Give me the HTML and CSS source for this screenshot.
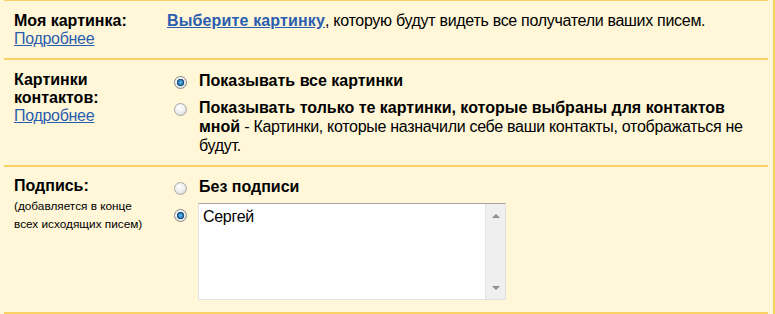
FILE: index.html
```html
<!DOCTYPE html>
<html lang="ru">
<head>
<meta charset="utf-8">
<title>Настройки</title>
<link rel="stylesheet" href="styles.css">
</head>
<body>
<div class="panel">
  <div class="row row-first">
    <div class="label">
      <div class="title">Моя картинка:</div>
      <a class="link" href="#">Подробнее</a>
    </div>
    <div class="content">
      <p class="text"><a class="link strong" href="#">Выберите картинку</a>, которую будут видеть все получатели ваших писем.</p>
    </div>
  </div>

  <div class="row">
    <div class="label">
      <div class="title">Картинки контактов:</div>
      <a class="link" href="#">Подробнее</a>
    </div>
    <div class="content">
      <div class="option">
        <span class="radio checked"></span>
        <div class="option-text"><b>Показывать все картинки</b></div>
      </div>
      <div class="option gap">
        <span class="radio"></span>
        <div class="option-text"><b>Показывать только те картинки, которые выбраны для контактов мной</b> - Картинки, которые назначили себе ваши контакты, отображаться не будут.</div>
      </div>
    </div>
  </div>

  <div class="row row-last">
    <div class="label">
      <div class="title">Подпись:</div>
      <div class="hint">(добавляется в конце всех исходящих писем)</div>
    </div>
    <div class="content">
      <div class="option">
        <span class="radio"></span>
        <div class="option-text"><b>Без подписи</b></div>
      </div>
      <div class="option sig">
        <span class="radio checked sig-radio"></span>
        <div class="textarea">
          <div class="ta-text">Сергей</div>
          <div class="scrollbar">
            <span class="arrow up"></span>
            <span class="arrow down"></span>
          </div>
        </div>
      </div>
    </div>
  </div>
</div>
</body>
</html>
```

FILE: styles.css
```css
html, body {
  margin: 0;
  padding: 0;
}

body {
  font-family: "Liberation Sans", Arial, sans-serif;
  font-size: 16px;
  line-height: 18px;
  letter-spacing: -0.3px;
  color: #000;
  background: #fff7d7;
}

b,
.title {
  font-weight: bold;
  letter-spacing: 0;
}

.strong {
  font-weight: bold;
  letter-spacing: 0.15px;
}

.panel {
  width: 775px;
  height: 314px;
  box-sizing: border-box;
  background: #fff7d7;
  border-right: 2px solid #fad163;
  padding-right: 5px;
  padding-left: 4px;
  overflow: hidden;
}

.row {
  display: grid;
  grid-template-columns: 153px 1fr;
  padding: 11px 0 10px 10px;
  border-bottom: 2px solid #fad163;
}

.row-first {
  border-top: 1px solid #fad163;
}

.row-last {
  padding-top: 10px;
  padding-bottom: 12px;
}

.title {
  width: 140px;
}

.link {
  color: #2a5db0;
  text-decoration: underline;
}

.text {
  margin: 0;
}

.hint {
  font-size: 11.8px;
  line-height: 18px;
  letter-spacing: 0;
  margin-top: 2px;
  width: 130px;
}

.option {
  display: flex;
  align-items: flex-start;
  padding-left: 7px;
  column-gap: 12px;
}

.option-text {
  line-height: 19px;
  flex: 1;
}

.option.gap {
  margin-top: 8px;
}

.radio {
  flex: none;
  width: 13px;
  height: 13px;
  margin-top: 5px;
  border-radius: 50%;
  box-sizing: border-box;
  border: 1px solid #a9a9a9;
  background: radial-gradient(circle at 40% 35%, #ffffff 0%, #f0f0f0 45%, #cfcfcf 100%);
}

.radio.checked {
  background:
    radial-gradient(circle at 50% 50%, #6fc0ee 0px, #1f6fae 2.6px, #0f3f6e 3.4px, transparent 4px),
    radial-gradient(circle at 40% 35%, #ffffff 0%, #f0f0f0 45%, #cfcfcf 100%);
  border-color: #8a8a8a;
}

.option.sig {
  margin-top: 7px;
  column-gap: 11px;
}

.sig-radio {
  margin-top: 6px;
}

.textarea {
  display: flex;
  width: 308px;
  height: 97px;
  box-sizing: border-box;
  background: #fff;
  border: 1px solid #e2e2e2;
  border-top-color: #a6a6a6;
}

.ta-text {
  flex: 1;
  padding: 4px 0 0 4px;
  font-size: 16px;
  line-height: 18px;
}

.scrollbar {
  width: 20px;
  flex: none;
  background: #efefef;
  border-left: 1px solid #e4e4e4;
  display: flex;
  flex-direction: column;
  justify-content: space-between;
  align-items: center;
  padding: 10px 0 9px;
  box-sizing: border-box;
}

.arrow {
  width: 0;
  height: 0;
  border-left: 4px solid transparent;
  border-right: 4px solid transparent;
}

.arrow.up {
  border-bottom: 4px solid #8c8c8c;
}

.arrow.down {
  border-top: 4px solid #8c8c8c;
}
```
